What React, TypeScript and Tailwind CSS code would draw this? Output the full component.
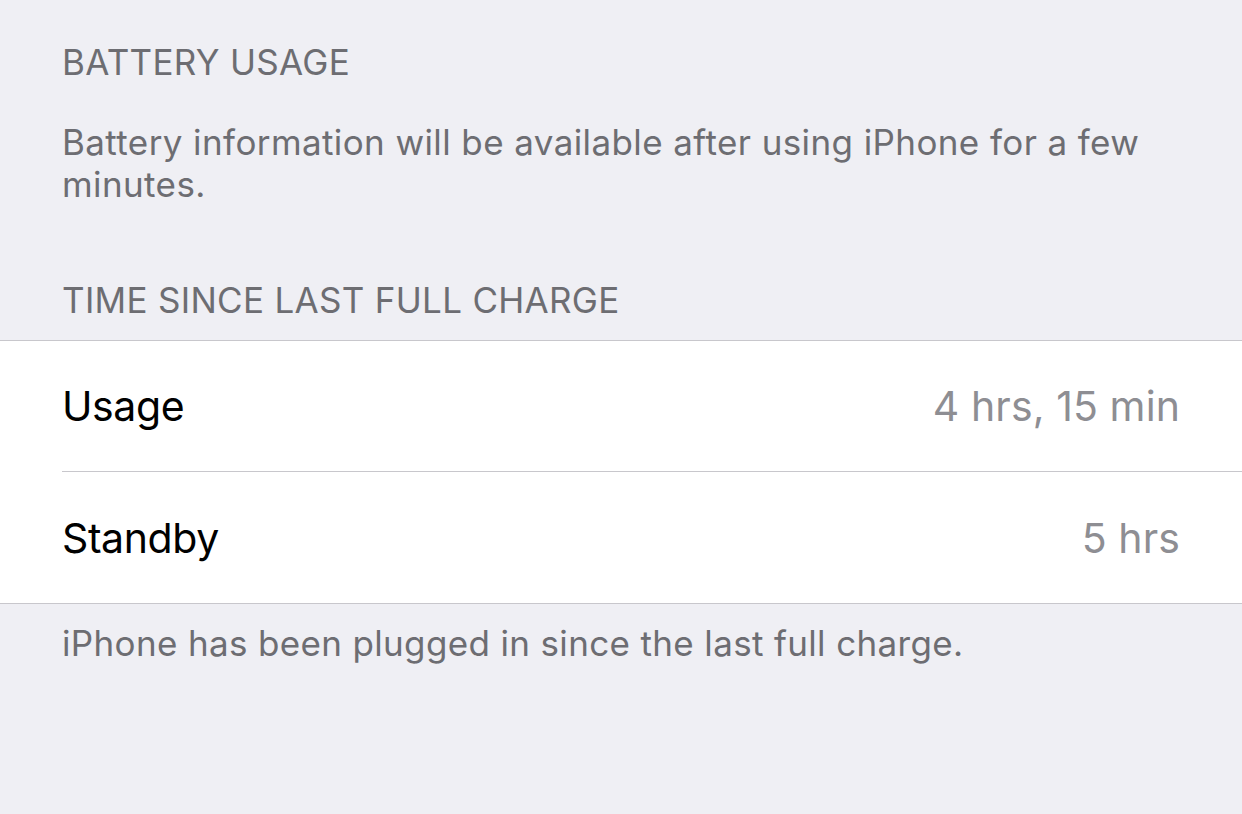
import React from 'react'

const font = { fontFamily: 'Inter, "Noto Sans", sans-serif' }

function Row({ label, value, last }: { label: string; value: string; last?: boolean }) {
  return (
    <div className="flex h-[131px] pl-[62px]">
      <div className={`flex flex-1 items-center justify-between pr-[62px] pt-[2px] ${last ? '' : 'border-b border-[#c8c7cc]'}`}>
        <span className="text-[41px] tracking-[-0.4px] text-black">{label}</span>
        <span className="text-[41px] tracking-[0.1px] text-[#8e8e93]">{value}</span>
      </div>
    </div>
  )
}

export default function App() {
  return (
    <div className="h-[814px] w-[1242px] overflow-hidden bg-[#efeff4] antialiased" style={font}>
      <div className="px-[62px] pt-[40px]">
        <div className="text-[35px] leading-[44px] tracking-[0.3px] text-[#6d6d72]">BATTERY USAGE</div>
        <div className="mt-[37px] text-[35px] leading-[42px] tracking-[0.4px] text-[#6d6d72]">
          Battery information will be available after using iPhone for a few minutes.
        </div>
        <div className="mt-[73px] text-[35px] leading-[44px] tracking-[0.3px] text-[#6d6d72]">
          TIME SINCE LAST FULL CHARGE
        </div>
      </div>
      <div className="mt-[18px] border-y border-[#c8c7cc] bg-white">
        <Row label="Usage" value="4 hrs, 15 min" />
        <Row label="Standby" value="5 hrs" last />
      </div>
      <div className="px-[62px] pt-[18px] text-[35px] leading-[42px] tracking-[0.35px] text-[#6d6d72]">
        iPhone has been plugged in since the last full charge.
      </div>
    </div>
  )
}
